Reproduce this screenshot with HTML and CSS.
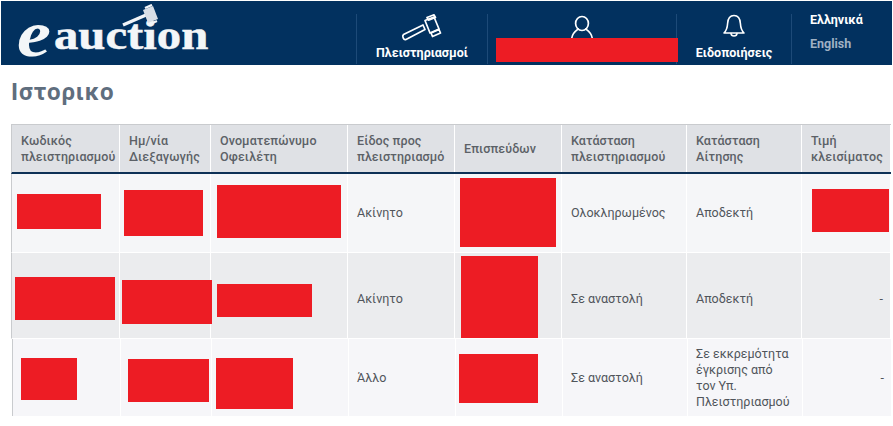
FILE: index.html
```html
<!DOCTYPE html>
<html lang="el">
<head>
<meta charset="utf-8">
<title>Ιστορικο</title>
<link rel="stylesheet" href="styles.css">
</head>
<body>
<header class="topbar">
  <a class="logo">
    <span class="logo-e">e</span><span class="logo-word">auction</span>
    <svg class="logo-gavel" viewBox="0 0 38 24" width="38" height="24" aria-hidden="true">
      <path d="M1 21 L24 11" stroke="#f2f5f8" stroke-width="3.4" fill="none"/>
      <path d="M21 6 L31 2 L36 15 L26 19 Z" fill="#d9dfe6"/>
      <path d="M23 4 L30 1 M28 20 L35 17" stroke="#f2f5f8" stroke-width="2.4" fill="none"/>
    </svg>
  </a>
  <nav class="nav">
    <div class="nav-item nav-auctions">
      <svg class="nav-icon" viewBox="0 0 42 28" width="42" height="28" fill="none" stroke="#fff" stroke-width="1.7" stroke-linejoin="round" stroke-linecap="round" aria-hidden="true">
        <path d="M2.5 20.5 L22 11 L24 15.5 L5 25.5 C2.5 26.5 .8 22 2.5 20.5 Z"/>
        <path d="M24 6.5 L33 3 L38 15 L29 19 Z"/>
        <path d="M26 3.5 L33 .8 L34.5 3.5 L27.5 6.2 Z"/>
        <path d="M30 19 L38 15.5 L39.5 19 L31.5 22.5 Z"/>
      </svg>
      <span class="nav-label">Πλειστηριασμοί</span>
    </div>
    <div class="nav-item nav-user">
      <svg class="nav-icon" viewBox="0 0 24 24" width="24" height="24" fill="none" stroke="#fff" stroke-width="1.7" stroke-linecap="round" aria-hidden="true">
        <ellipse cx="12" cy="8.5" rx="6.4" ry="7"/>
        <path d="M1.8 23 C2.5 18 6 15.6 8.2 14 M22.2 23 C21.5 18 18 15.6 15.8 14"/>
      </svg>
    </div>
    <div class="nav-item nav-alerts">
      <svg class="nav-icon" viewBox="0 0 24 24" width="24" height="24" fill="none" stroke="#fff" stroke-width="1.6" stroke-linejoin="round" stroke-linecap="round" aria-hidden="true">
        <path d="M2 19 C5 16 5.4 13 5.6 9.5 C5.9 4.5 8.5 1.5 12 1.5 C15.5 1.5 18.1 4.5 18.4 9.5 C18.6 13 19 16 22 19 Z"/>
        <path d="M9 19.5 C9.3 22.8 14.7 22.8 15 19.5"/>
      </svg>
      <span class="nav-label">Ειδοποιήσεις</span>
    </div>
    <div class="langs">
      <span class="lang lang-active">Ελληνικά</span>
      <span class="lang">English</span>
    </div>
  </nav>
  <div class="redact redact-user"></div>
</header>

<h1 class="title">Ιστορικο</h1>

<main class="history">
  <div class="row row-head">
    <div class="cell">Κωδικός πλειστηριασμού</div>
    <div class="cell">Ημ/νία Διεξαγωγής</div>
    <div class="cell">Ονοματεπώνυμο Οφειλέτη</div>
    <div class="cell">Είδος προς πλειστηριασμό</div>
    <div class="cell">Επισπεύδων</div>
    <div class="cell">Κατάσταση πλειστηριασμού</div>
    <div class="cell">Κατάσταση Αίτησης</div>
    <div class="cell">Τιμή κλεισίματος</div>
  </div>
  <div class="row row-a">
    <div class="cell"></div><div class="cell"></div><div class="cell"></div>
    <div class="cell">Ακίνητο</div>
    <div class="cell"></div>
    <div class="cell">Ολοκληρωμένος</div>
    <div class="cell">Αποδεκτή</div>
    <div class="cell"></div>
  </div>
  <div class="row row-b">
    <div class="cell"></div><div class="cell"></div><div class="cell"></div>
    <div class="cell">Ακίνητο</div>
    <div class="cell"></div>
    <div class="cell">Σε αναστολή</div>
    <div class="cell">Αποδεκτή</div>
    <div class="cell cell-price">-</div>
  </div>
  <div class="row row-c">
    <div class="cell"></div><div class="cell"></div><div class="cell"></div>
    <div class="cell">Άλλο</div>
    <div class="cell"></div>
    <div class="cell">Σε αναστολή</div>
    <div class="cell">Σε εκκρεμότητα έγκρισης από τον Υπ. Πλειστηριασμού</div>
    <div class="cell cell-price">-</div>
  </div>
  <div class="redact r1"></div><div class="redact r2"></div><div class="redact r3"></div>
  <div class="redact r4"></div><div class="redact r5"></div>
  <div class="redact r6"></div><div class="redact r7"></div><div class="redact r8"></div>
  <div class="redact r9"></div>
  <div class="redact r10"></div><div class="redact r11"></div><div class="redact r12"></div>
  <div class="redact r13"></div>
</main>
</body>
</html>
```
FILE: styles.css
```css
* { box-sizing: border-box; }
html, body { margin: 0; padding: 0; background: #fff; }
body { width: 893px; height: 426px; overflow: hidden; font-family: Roboto, "Noto Sans", sans-serif; color: #50555b; position: relative; }

.topbar { position: relative; display: flex; height: 64px; margin: 1px 1px 0 1px; background: #02315f; color: #fff; }
.logo { position: relative; display: block; flex: 0 0 355px; height: 64px; font-family: "Liberation Serif", serif; color: #f3f6f8; }
.logo-e { position: absolute; left: 16px; top: 4px; font-size: 66px; line-height: 58px; font-style: italic; font-weight: 700; transform: scaleX(1.16); transform-origin: left top; }
.logo-word { position: absolute; left: 53px; top: 12px; font-size: 42px; line-height: 44px; font-weight: 700; -webkit-text-stroke: .5px #f3f6f8; transform: scaleX(1.16); transform-origin: left top; }
.logo-gavel { position: absolute; left: 121px; top: 3px; }

.nav { display: flex; flex: 1; padding-top: 13px; }
.nav-item { position: relative; display: flex; flex-direction: column; align-items: center; border-left: 1px solid #1d4a78; height: 50px; }
.nav-auctions { flex: 0 0 131px; }
.nav-user { flex: 0 0 189px; padding-top: 1px; }
.nav-alerts { flex: 0 0 115px; }
.nav-label { position: absolute; top: 31px; left: 0; right: 0; text-align: center; font-size: 12.5px; line-height: 16px; font-weight: 700; white-space: nowrap; }
.nav-icon { display: block; }
.langs { display: flex; flex-direction: column; gap: 9px; padding: 0 0 0 18px; border-left: 1px solid #1d4a78; height: 50px; font-size: 12.5px; line-height: 15px; font-weight: 700; color: #9fb0c3; }
.lang-active { color: #fff; margin-top: -2px; }

.redact { position: absolute; background: #ed1c24; }
.redact-user { left: 495px; top: 37px; width: 182px; height: 24px; }

.title { margin: 13px 0 0 11px; font-size: 24px; line-height: 28px; font-weight: 700; letter-spacing: .9px; color: #5f6e7e; }

.history { position: absolute; left: 11px; top: 124px; width: 880px; height: 292px; overflow: hidden; font-size: 12.5px; line-height: 16px; }
.row { display: grid; grid-template-columns: 108px 91px 137px 107px 107px 125px 115px 89px; }
.cell { display: flex; align-items: center; padding: 0 8px 0 9px; border-right: 1px solid #fff; }
.row-head { height: 50px; font-weight: 500; letter-spacing: .1px; color: #5c6167; background: #dfe1e5; border-top: 1px solid #c9cbce; border-left: 1px solid #c9cbce; border-bottom: 2px solid #0d3156; }
.row-head .cell { padding-top: 1px; }
.row-a { height: 79px; background: #f5f6f8; border-left: 1px solid #c9cbce; border-bottom: 1px solid #fff; }
.row-b { height: 86px; background: #ebecee; border-left: 1px solid #c9cbce; border-bottom: 1px solid #fff; }
.row-b .cell { padding-top: 7px; }
.row-c { height: 77px; background: #f6f6f9; margin-left: 1px; border-left: 1px solid #c9cbce; }
.row-c .cell { margin-left: -1px; padding-top: 1px; }
.cell-price { justify-content: flex-end; padding-right: 7px; }

.r1 { left: 6px; top: 70px; width: 84px; height: 35px; }
.r2 { left: 113px; top: 66px; width: 79px; height: 46px; }
.r3 { left: 206px; top: 61px; width: 124px; height: 53px; }
.r4 { left: 449px; top: 54px; width: 96px; height: 69px; }
.r5 { left: 801px; top: 65px; width: 77px; height: 43px; }
.r6 { left: 4px; top: 153px; width: 100px; height: 43px; }
.r7 { left: 111px; top: 156px; width: 90px; height: 44px; }
.r8 { left: 206px; top: 160px; width: 95px; height: 33px; }
.r9 { left: 450px; top: 132px; width: 77px; height: 82px; }
.r10 { left: 10px; top: 234px; width: 56px; height: 42px; }
.r11 { left: 117px; top: 235px; width: 81px; height: 43px; }
.r12 { left: 205px; top: 234px; width: 77px; height: 51px; }
.r13 { left: 448px; top: 230px; width: 79px; height: 49px; }
```
